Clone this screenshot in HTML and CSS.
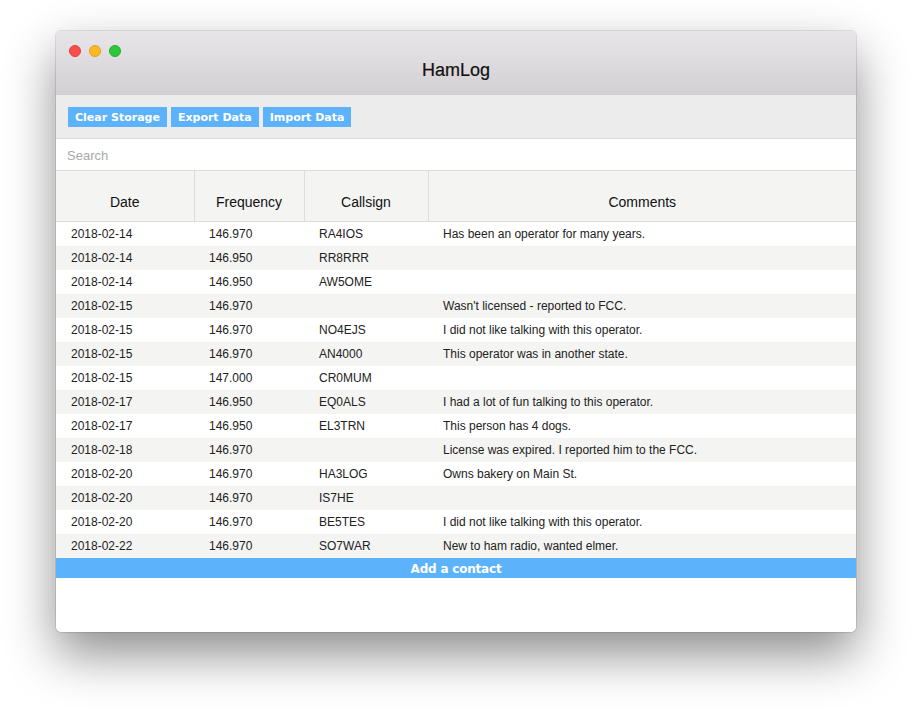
FILE: index.html
```html
<!DOCTYPE html>
<html>
<head>
<meta charset="utf-8">
<title>HamLog</title>
<link rel="stylesheet" href="styles.css">
</head>
<body>
<div class="window">
  <div class="titlebar">
    <div class="lights">
      <span class="light red"></span>
      <span class="light yellow"></span>
      <span class="light green"></span>
    </div>
    <div class="title">HamLog</div>
  </div>
  <div class="toolbar">
    <button class="btn">Clear Storage</button>
    <button class="btn">Export Data</button>
    <button class="btn">Import Data</button>
  </div>
  <div class="search"><input class="search-input" type="text" placeholder="Search"></div>
  <table class="log">
    <colgroup>
      <col class="c-date"><col class="c-freq"><col class="c-call"><col class="c-comm">
    </colgroup>
    <thead>
      <tr><th>Date</th><th>Frequency</th><th>Callsign</th><th>Comments</th></tr>
    </thead>
    <tbody>
      <tr><td>2018-02-14</td><td>146.970</td><td>RA4IOS</td><td>Has been an operator for many years.</td></tr>
      <tr><td>2018-02-14</td><td>146.950</td><td>RR8RRR</td><td></td></tr>
      <tr><td>2018-02-14</td><td>146.950</td><td>AW5OME</td><td></td></tr>
      <tr><td>2018-02-15</td><td>146.970</td><td></td><td>Wasn't licensed - reported to FCC.</td></tr>
      <tr><td>2018-02-15</td><td>146.970</td><td>NO4EJS</td><td>I did not like talking with this operator.</td></tr>
      <tr><td>2018-02-15</td><td>146.970</td><td>AN4000</td><td>This operator was in another state.</td></tr>
      <tr><td>2018-02-15</td><td>147.000</td><td>CR0MUM</td><td></td></tr>
      <tr><td>2018-02-17</td><td>146.950</td><td>EQ0ALS</td><td>I had a lot of fun talking to this operator.</td></tr>
      <tr><td>2018-02-17</td><td>146.950</td><td>EL3TRN</td><td>This person has 4 dogs.</td></tr>
      <tr><td>2018-02-18</td><td>146.970</td><td></td><td>License was expired. I reported him to the FCC.</td></tr>
      <tr><td>2018-02-20</td><td>146.970</td><td>HA3LOG</td><td>Owns bakery on Main St.</td></tr>
      <tr><td>2018-02-20</td><td>146.970</td><td>IS7HE</td><td></td></tr>
      <tr><td>2018-02-20</td><td>146.970</td><td>BE5TES</td><td>I did not like talking with this operator.</td></tr>
      <tr><td>2018-02-22</td><td>146.970</td><td>SO7WAR</td><td>New to ham radio, wanted elmer.</td></tr>
    </tbody>
  </table>
  <button class="add">Add a contact</button>
</div>
</body>
</html>
```
FILE: styles.css
```css
html, body {
  margin: 0;
  padding: 0;
  background: #ffffff;
}
body {
  min-height: 712px;
  box-sizing: border-box;
  padding: 31px 56px 80px;
  font-family: "Liberation Sans", Arial, sans-serif;
}
.window {
  width: 800px;
  height: 601px;
  background: #ffffff;
  border-radius: 5px;
  overflow: hidden;
  box-shadow: 0 0 0 1px rgba(0,0,0,0.1), 0 22px 50px rgba(0,0,0,0.45);
  display: flex;
  flex-direction: column;
}
.titlebar {
  height: 64px;
  box-sizing: border-box;
  background: linear-gradient(#e8e6e8, #d2d0d2);
  padding-top: 14px;
  display: flex;
  flex-direction: column;
}
.lights {
  display: flex;
  gap: 8px;
  padding-left: 13px;
  height: 12px;
}
.light {
  width: 12px;
  height: 12px;
  border-radius: 50%;
  box-sizing: border-box;
}
.red { background: #fc4d4d; border: 1px solid #e2403f; }
.yellow { background: #fdb824; border: 1px solid #dfa023; }
.green { background: #2cc83a; border: 1px solid #21ae2d; }
.title {
  margin-top: 2px;
  text-align: center;
  font-size: 18px;
  line-height: 22px;
  color: #111;
  -webkit-text-stroke: 0.2px #111;
}
.toolbar {
  height: 44px;
  box-sizing: border-box;
  background: #ececec;
  border-bottom: 1px solid #d9d9d9;
  padding: 12px 12px 0;
  display: flex;
  gap: 4px;
  align-items: flex-start;
}
.btn {
  height: 20px;
  border: none;
  margin: 0;
  background: #5db3fb;
  color: #ffffff;
  font-family: "DejaVu Sans", Verdana, sans-serif;
  font-weight: bold;
  font-size: 11px;
  padding: 0 7px;
}
.search {
  height: 32px;
  box-sizing: border-box;
  border-bottom: 1px solid #dcdcdc;
  background: #fff;
}
.search-input {
  width: 100%;
  height: 31px;
  box-sizing: border-box;
  border: none;
  outline: none;
  padding: 2px 11px 0;
  font-family: "Liberation Sans", Arial, sans-serif;
  font-size: 13px;
  color: #333;
  background: #fff;
}
.search-input::placeholder { color: #a9a9a9; }
.log {
  width: 800px;
  border-collapse: collapse;
  table-layout: fixed;
}
.c-date { width: 138px; }
.c-freq { width: 110px; }
.c-call { width: 124px; }
.c-comm { width: 428px; }
.log th {
  background: #f4f4f3;
  font-weight: normal;
  font-size: 14px;
  line-height: 17px;
  color: #111;
  padding: 23px 0 10px;
  text-align: center;
  border-right: 1px solid #dddddd;
  border-bottom: 1px solid #dddddd;
}
.log th:last-child { border-right: none; }
.log td {
  height: 24px;
  padding: 0 0 0 15px;
  font-size: 12px;
  color: #222;
  line-height: 24px;
  white-space: nowrap;
}
.log tbody tr:nth-child(even) td { background: #f4f4f3; }
.add {
  height: 20px;
  border: none;
  margin: 0;
  padding: 1px 0 0;
  width: 100%;
  background: #5db3fb;
  color: #ffffff;
  font-family: "DejaVu Sans", Verdana, sans-serif;
  font-weight: bold;
  font-size: 12px;
  letter-spacing: -0.2px;
}
```
